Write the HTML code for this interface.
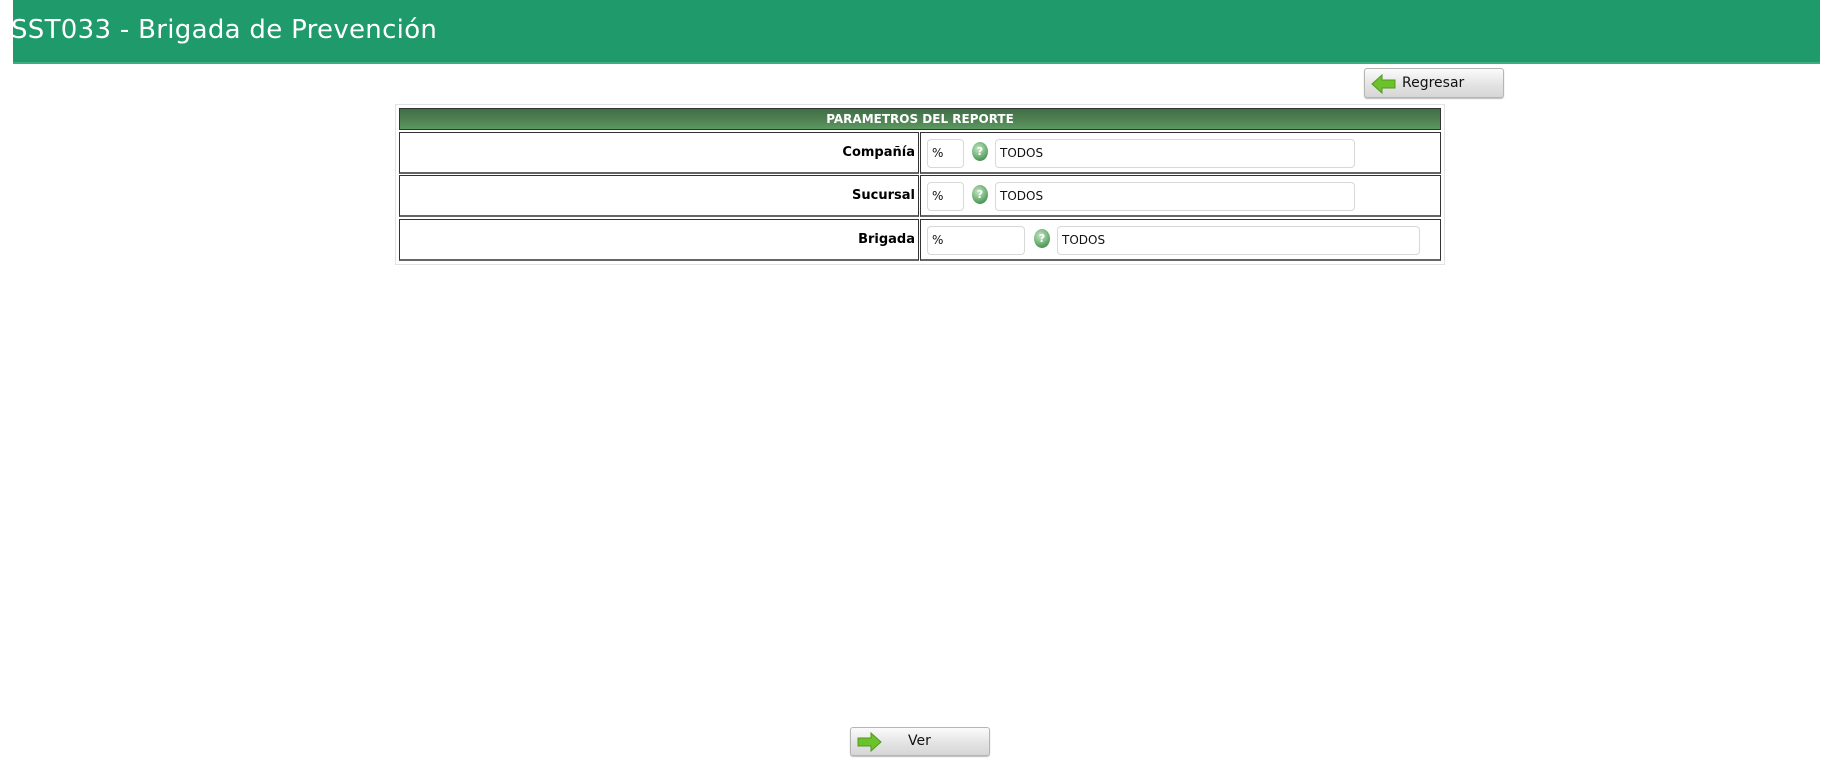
<!DOCTYPE html>
<html><head><meta charset="utf-8"><style>
*{margin:0;padding:0;box-sizing:border-box}
body{width:1829px;height:775px;background:#fff;position:relative;overflow:hidden;font-family:"DejaVu Sans","Liberation Sans",sans-serif}
.abs{position:absolute}
#bar{left:13px;top:0;width:1807px;height:64px;background:#1e9a6b;border-bottom:2px solid #3fae7f}
#title{left:11px;top:15px;color:#fff;font-size:26px;white-space:nowrap;letter-spacing:0.3px}
.btn{border:1px solid #b5b5b5;border-radius:3px;background:linear-gradient(#fbfbfb,#e2e2e2 60%,#d6d6d6);box-shadow:0 1px 1px #bbb;font-size:14px;color:#111}
.box{border:1px solid #e2e2e2}
#hdr{left:399px;top:108px;width:1042px;height:22px;background:linear-gradient(#3f6f45,#4f7f52 50%,#5b9960);border:1px solid #333;color:#fff;font-weight:bold;font-size:12px;text-align:center;line-height:20px}
.cell{border:1px solid #333;border-bottom:2px solid #666;background:#fff}
.lbl{font-weight:bold;font-size:13px;text-align:right;padding-right:2px}
.inp{border:1px solid #d8d8d8;border-radius:4px;background:#fff;font-size:12px;padding-left:4px;line-height:27px;color:#111}
.q{width:16px;height:19px;border-radius:50%;background:radial-gradient(circle at 40% 35%,#c6e6c4,#5aa464 65%,#2e6f3b);color:#fff;font-size:11px;font-weight:bold;text-align:center;line-height:19px}
</style></head><body>
<div id="bar" class="abs"></div>
<div id="title" class="abs">SST033 - Brigada de Prevención</div>

<div class="abs btn" style="left:1364px;top:68px;width:140px;height:30px">
<svg class="abs" style="left:6px;top:5px" width="26" height="20" viewBox="0 0 26 20"><path d="M1 10 L11 1 L11 6 L24 6 L24 14 L11 14 L11 19 Z" fill="#6cc22b" stroke="#4f9a1c" stroke-width="1"/></svg>
<span class="abs" style="left:37px;top:6px">Regresar</span></div>

<div class="abs box" style="left:395px;top:104px;width:1050px;height:161px"></div>
<div id="hdr" class="abs">PARAMETROS DEL REPORTE</div>

<div class="abs cell" style="left:399px;top:132px;width:520px;height:42px"></div>
<div class="abs cell" style="left:920px;top:132px;width:521px;height:42px"></div>
<div class="abs lbl" style="left:399px;top:145px;width:518px">Compañía</div>
<div class="abs inp" style="left:927px;top:139px;width:37px;height:29px">%</div>
<div class="abs q" style="left:972px;top:142px">?</div>
<div class="abs inp" style="left:995px;top:139px;width:360px;height:29px">TODOS</div>

<div class="abs cell" style="left:399px;top:175px;width:520px;height:42px"></div>
<div class="abs cell" style="left:920px;top:175px;width:521px;height:42px"></div>
<div class="abs lbl" style="left:399px;top:188px;width:518px">Sucursal</div>
<div class="abs inp" style="left:927px;top:182px;width:37px;height:29px">%</div>
<div class="abs q" style="left:972px;top:185px">?</div>
<div class="abs inp" style="left:995px;top:182px;width:360px;height:29px">TODOS</div>

<div class="abs cell" style="left:399px;top:219px;width:520px;height:42px"></div>
<div class="abs cell" style="left:920px;top:219px;width:521px;height:42px"></div>
<div class="abs lbl" style="left:399px;top:232px;width:518px">Brigada</div>
<div class="abs inp" style="left:927px;top:226px;width:98px;height:29px">%</div>
<div class="abs q" style="left:1034px;top:229px">?</div>
<div class="abs inp" style="left:1057px;top:226px;width:363px;height:29px">TODOS</div>

<div class="abs btn" style="left:850px;top:727px;width:140px;height:29px">
<svg class="abs" style="left:5px;top:4px" width="26" height="20" viewBox="0 0 26 20"><path d="M25 10 L15 1 L15 6 L2 6 L2 14 L15 14 L15 19 Z" fill="#6cc22b" stroke="#4f9a1c" stroke-width="1"/></svg>
<span class="abs" style="left:57px;top:5px">Ver</span></div>
</body></html>
